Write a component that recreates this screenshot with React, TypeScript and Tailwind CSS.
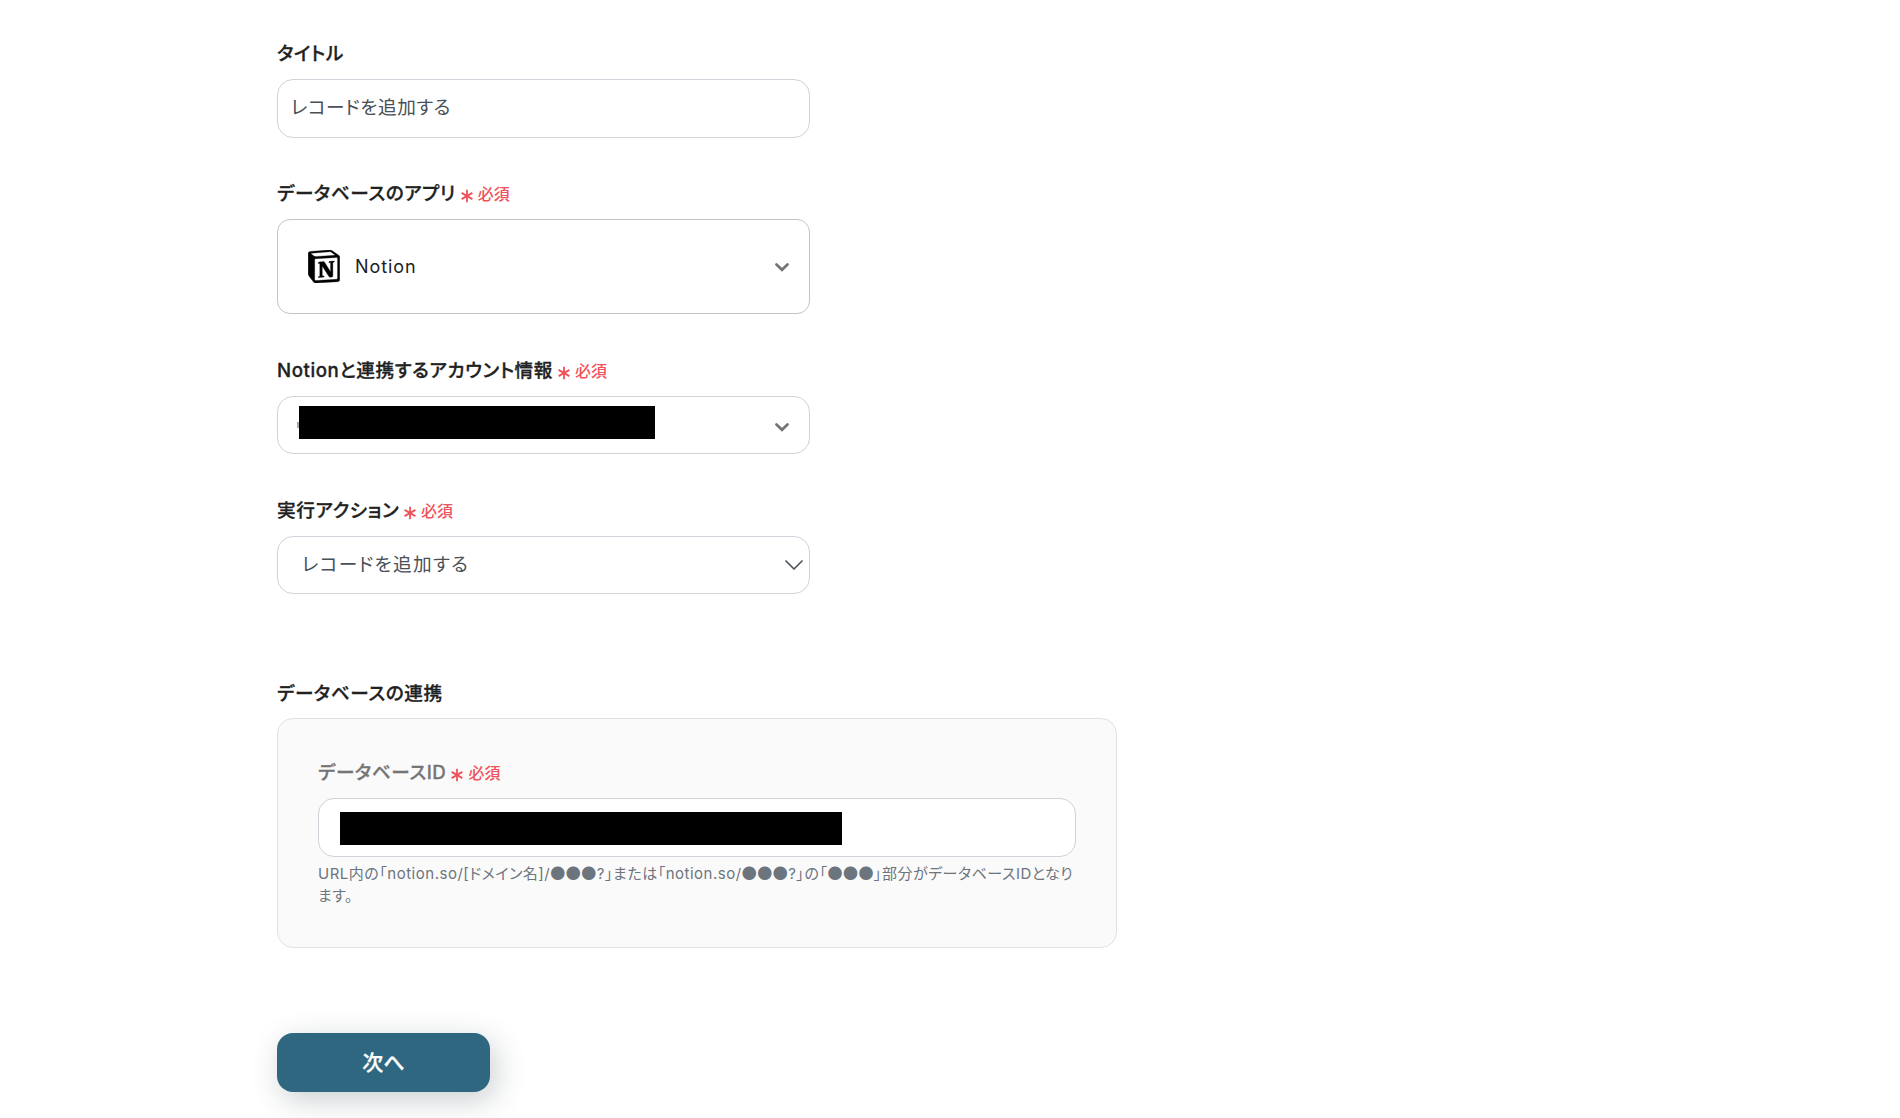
import React, { useState } from 'react';
import { clsx } from 'clsx';

function NotionLogo() {
  return (
    <svg viewBox="0 0 96 100" className="h-[33px] w-8 flex-shrink-0" aria-hidden="true">
      <path
        fillRule="evenodd"
        clipRule="evenodd"
        fill="#000"
        stroke="#000"
        strokeWidth="1"
        d="M61.35.227l-55.333 4.087C1.553 4.7 0 7.617 0 11.113v60.66c0 2.723.967 5.053 3.3 8.167l13.007 16.913c2.137 2.723 4.08 3.307 8.16 3.113l64.257-3.89c5.433-.387 6.99-2.917 6.99-7.193V20.64c0-2.21-.873-2.847-3.443-4.733L74.167 3.143c-4.273-3.107-6.02-3.5-12.817-2.917zM25.92 19.523c-5.247.353-6.437.433-9.417-1.99L8.927 11.507c-.77-.78-.383-1.753 1.557-1.947l53.193-3.887c4.467-.39 6.793 1.167 8.54 2.527l9.123 6.61c.39.197 1.36 1.36.193 1.36l-54.933 3.307-.68.047zM19.803 88.3V30.367c0-2.53.777-3.697 3.103-3.893L86 22.78c2.14-.193 3.107 1.167 3.107 3.693v57.547c0 2.53-.39 4.67-3.883 4.863l-60.377 3.5c-3.493.193-5.043-.97-5.043-4.083zm59.6-54.827c.387 1.75 0 3.5-1.75 3.7l-2.91.577v42.773c-2.527 1.36-4.853 2.137-6.797 2.137-3.107 0-3.883-.973-6.21-3.887l-19.03-29.94v28.967l6.02 1.363s0 3.5-4.857 3.5l-13.39.777c-.39-.78 0-2.723 1.357-3.11l3.497-.97v-38.3L30.48 40.667c-.39-1.75.58-4.277 3.3-4.473l14.367-.967 19.8 30.327v-26.83l-5.047-.58c-.39-2.143 1.163-3.7 3.103-3.89l13.4-.78z"
      />
    </svg>
  );
}

interface ChevronProps {
  thin?: boolean;
}

function Chevron({ thin }: ChevronProps) {
  return thin ? (
    <svg viewBox="0 0 18 10" className="h-[10px] w-[18px]" fill="none">
      <path d="m1 1 8 8 8-8" stroke="#4f5459" strokeWidth="1.700" strokeLinecap="round" strokeLinejoin="round" />
    </svg>
  ) : (
    <svg viewBox="0 0 14 9" className="h-[9px] w-3.5" fill="none">
      <path d="m1.500 1.500 5.500 5.300 5.500-5.300" stroke="#757575" strokeWidth="2.700" strokeLinecap="round" />
    </svg>
  );
}

interface LabelProps {
  text: string;
  required?: boolean;
  muted?: boolean;
}

function Label({ text, required, muted }: LabelProps) {
  return (
    <div className="flex h-[27px] items-center gap-[5px] whitespace-nowrap">
      <span
        className={clsx(
          'text-[18.670px] leading-[27px] font-medium tracking-[0.560px] [-webkit-text-stroke:0.3px]',
          muted ? 'text-[#757575]' : 'text-[#212121]'
        )}
      >
        {text}
      </span>
      {required && (
        <span className="flex items-center gap-[5px] pt-px text-base leading-6 font-medium text-[#f0525b]">
          <svg viewBox="0 0 12 14" className="mt-[3px] h-3.5 w-3" fill="none" stroke="currentColor" strokeWidth="1.800">
            <path d="M6 .8v12.400M.6 3.900l10.800 6.200M.6 10.100l10.800-6.200" />
          </svg>
          必須
        </span>
      )}
    </div>
  );
}

// Inter's circle is smaller than the Japanese one
function Dots() {
  return <span className="font-['Noto_Sans_CJK_JP',sans-serif]">●●●</span>;
}

const boxClass = 'flex w-full items-center border border-[#ced4da] bg-white text-[#495057]';

export default function App() {
  const [title, setTitle] = useState('レコードを追加する');

  return (
    <main
      lang="ja"
      className="h-[1118px] overflow-hidden bg-white pt-10 pl-[277px] font-[Inter,'Noto_Sans_CJK_JP',sans-serif] text-[18.670px] [font-feature-settings:'palt']"
    >
      <div className="flex w-[533px] flex-col">
        {/* Title */}
        <Label text="タイトル" />
        <input
          type="text"
          value={title}
          onChange={(e) => setTitle(e.target.value)}
          className="mt-3 h-[59px] w-full rounded-2xl border border-[#ced4da] bg-white px-[13px] pb-1.5 tracking-[0.500px] text-[#495057] [font-feature-settings:inherit]"
        />

        {/* App */}
        <div className="mt-[42px]">
          <Label text="データベースのアプリ" required />
          <button className="mt-3 flex h-[95px] w-full items-center rounded-[13px] border border-[#c4c4c4] pr-5 pl-[30px]">
            <NotionLogo />
            <span className="mt-px ml-[15px] text-lg tracking-[0.900px] text-[#212121]">Notion</span>
            <span className="mt-px ml-auto">
              <Chevron />
            </span>
          </button>
        </div>

        {/* Account */}
        <div className="mt-[43px]">
          <Label text="Notionと連携するアカウント情報" required />
          <div className={clsx(boxClass, 'mt-3 h-[58px] rounded-2xl pr-5 pl-[19px]')}>
            <div className="h-1.5 w-0.5 bg-[#a3aab1]" />
            <div className="mb-[5px] h-[33px] w-[356px] bg-black" />
            <span className="mt-1 ml-auto">
              <Chevron />
            </span>
          </div>
        </div>

        {/* Action */}
        <div className="mt-[43px]">
          <Label text="実行アクション" required />
          <div className={clsx(boxClass, 'mt-3 h-[58px] rounded-2xl pr-1.5 pl-6 tracking-[1.300px]')}>
            <span>レコードを追加する</span>
            <span className="ml-auto">
              <Chevron thin />
            </span>
          </div>
        </div>
      </div>

      {/* Database */}
      <div className="mt-[86px] w-[840px]">
        <Label text="データベースの連携" />
        <section className="mt-[11px] h-[230px] rounded-2xl border border-[#dee2e6] bg-[#fafafa] px-10 pt-10">
          <Label text="データベースID" required muted />
          <div className={clsx(boxClass, 'mt-3 h-[59px] rounded-2xl pl-[21px]')}>
            <div className="mt-px h-[33px] w-[502px] bg-black" />
          </div>
          <p className="mt-[5px] text-[15px] leading-[22px] tracking-[0.510px] whitespace-nowrap text-[#6c757d]">
            URL内の「notion.so/[ドメイン名]/
            <Dots />
            ?」または「notion.so/
            <Dots />
            ?」の「
            <Dots />
            」部分がデータベースIDとなり
            <br />
            ます。
          </p>
        </section>
      </div>

      <button className="mt-[85px] h-[59px] w-[213px] rounded-2xl bg-[#2f6780] text-[21px] font-medium text-white shadow-[5px_8px_30px_rgba(33,50,60,0.24)] [-webkit-text-stroke:0.3px]">
        次へ
      </button>
    </main>
  );
}
